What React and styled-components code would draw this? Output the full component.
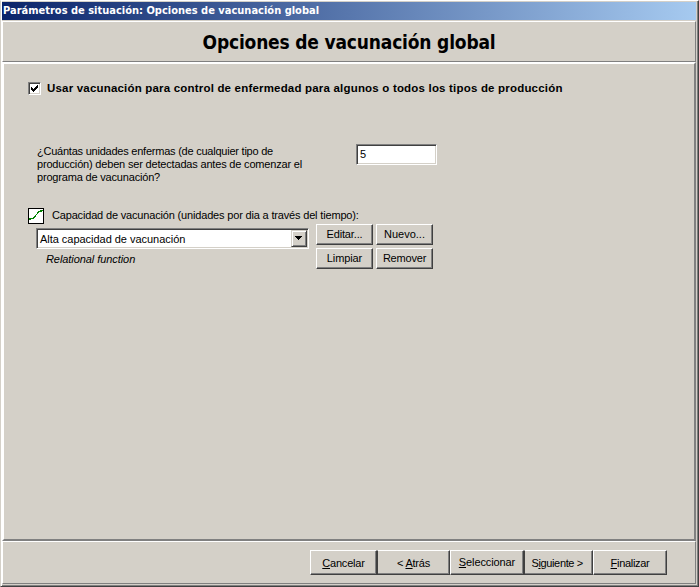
import React from "react";
import styled, { createGlobalStyle, css } from "styled-components";

const GlobalStyle = createGlobalStyle`
  * { box-sizing: border-box; }
  body { margin: 0; background: #d4d0c8; }
`;

const sunken = css`
  border: 1px solid;
  border-color: #808080 #fff #fff #808080;
  box-shadow: inset 1px 1px #404040, inset -1px -1px #d4d0c8;
`;

const raised = css`
  border: 1px solid;
  border-color: #fff #404040 #404040 #fff;
  box-shadow: inset -1px -1px #808080;
`;

const Window = styled.div`
  width: 699px;
  height: 587px;
  display: flex;
  flex-direction: column;
  background: #d4d0c8;
  border: 1px solid;
  border-color: #fff #404040 #404040 #d4d0c8;
  box-shadow: inset 1px 0 #fff, inset -1px -1px #808080;
  padding: 1px 2px 2px 1px;
  color: #000;
  font: 11px/13px "Liberation Sans", Arial, sans-serif;
  overflow: hidden;
`;

const TitleBar = styled.header`
  height: 18px;
  padding-left: 1px;
  background: linear-gradient(90deg, #0a246a, #a6caf0);
  color: #fff;
  font: bold 11px/18px "DejaVu Sans Condensed", "DejaVu Sans", sans-serif;
  font-stretch: condensed;
`;

const Heading = styled.section`
  height: 41px;
  margin: 1px 0 0;
  border: 1px solid;
  border-color: #fff #808080 #808080 #fff;
  display: flex;
  justify-content: center;
`;

const Title = styled.h1`
  margin: 0;
  font: bold 19px/40px "DejaVu Sans Condensed", "DejaVu Sans", sans-serif;
  font-stretch: condensed;
`;

const Body = styled.main`
  height: 479px;
  border: 2px solid;
  border-color: #fff #808080 #808080 #fff;
  padding: 18px 0 0 24px;
`;

const Label = styled.span`
  display: block;
  white-space: pre;
  letter-spacing: ${(p) => p.$track || 0}px;
`;

const CheckRow = styled.label`
  display: flex;
  align-items: center;
  gap: 6px;
  height: 13px;
  font-size: 11.5px;
  font-weight: bold;
`;

const CheckBox = styled.span`
  ${sunken}
  width: 13px;
  height: 13px;
  background: #fff;
  display: flex;
  svg { display: block; margin: 1px; }
`;

const QuestionRow = styled.div`
  display: flex;
  margin: 49px 0 0 8px;
`;

const Question = styled.div`
  width: 320px;
  padding: 1px 0 0 1px;
`;

const NumberField = styled.div`
  ${sunken}
  width: 81px;
  height: 21px;
  padding: 3px 3px;
  background: #fff;
`;

const CapacityRow = styled.div`
  display: flex;
  margin-top: 20px;
`;

const CapacityMain = styled.div`
  width: 288px;
  padding-top: 4px;
`;

const CapacityLabel = styled.div`
  display: flex;
  gap: 8px;
  height: 16px;
  line-height: 15px;
  svg { display: block; flex: none; }
`;

const Combo = styled.div`
  ${sunken}
  width: 273px;
  height: 21px;
  margin: 4px 0 0 8px;
  padding: 1px;
  display: flex;
  justify-content: space-between;
  background: #fff;
`;

const ComboText = styled.div`
  padding: 3px 0 0 2px;
`;

const ComboButton = styled.div`
  width: 16px;
  height: 17px;
  border: 1px solid;
  border-color: #d4d0c8 #404040 #404040 #d4d0c8;
  box-shadow: inset 1px 1px #fff, inset -1px -1px #808080;
  background: #d4d0c8;
  svg { display: block; margin: 5px 0 0 3px; }
`;

const Kind = styled.div`
  font-style: italic;
  margin: 4px 0 0 18px;
`;

const ButtonGrid = styled.div`
  display: grid;
  grid-template-columns: 57px 57px;
  grid-auto-rows: 21px;
  gap: 3px;
  margin-top: 20px;
`;

const Button = styled.button`
  ${raised}
  display: flex;
  justify-content: center;
  align-items: center;
  margin: 0;
  padding: 0;
  background: #d4d0c8;
  color: #000;
  font: inherit;
`;

const NavButton = styled(Button)`
  width: ${(p) => p.$width}px;
  height: 25px;
  border-left-color: ${(p) => (p.$joined ? "#404040" : "#fff")};
  padding-top: ${(p) => (p.$high ? 0 : 1)}px;
  u { text-underline-offset: 1px; text-decoration-thickness: 1px; text-decoration-skip-ink: none; }
`;

const Footer = styled.footer`
  flex: 1;
  border: 1px solid;
  border-color: #fff #808080 #808080 #fff;
  display: flex;
  justify-content: flex-end;
  padding: 8px 28px 0 0;
`;

export default function App() {
  return (
    <>
      <GlobalStyle />
      <Window>
        <TitleBar><Label>Parámetros de situación: Opciones de vacunación global</Label></TitleBar>
        <Heading><Title><Label $track={-0.18}>Opciones de vacunación global</Label></Title></Heading>
        <Body>
          <CheckRow>
            <CheckBox>
              <svg width="9" height="9" shapeRendering="crispEdges">
                <path d="M1 3h1v1h1v1h1v-1h1v-1h1v-1h1v-1h1v3h-1v1h-1v1h-1v1h-1v1h-1v-1h-1v-1h-1z" />
              </svg>
            </CheckBox>
            <Label $track={0.19}>Usar vacunación para control de enfermedad para algunos o todos los tipos de producción</Label>
          </CheckRow>
          <QuestionRow>
            <Question>
              <Label $track={-0.23}>¿Cuántas unidades enfermas (de cualquier tipo de</Label>
              <Label $track={-0.18}>producción) deben ser detectadas antes de comenzar el</Label>
              <Label $track={-0.18}>programa de vacunación?</Label>
            </Question>
            <NumberField>5</NumberField>
          </QuestionRow>
          <CapacityRow>
            <CapacityMain>
              <CapacityLabel>
                <svg width="16" height="16" shapeRendering="crispEdges">
                  <rect x="0.5" y="0.5" width="15" height="15" fill="#fff" stroke="#000" />
                  <path d="M1 11h2v1h-2zM1 10h5v1h-5zM5 9h2v1h-2zM6 8h2v1h-2zM7 7h1v1h-1zM8 6h1v1h-1zM9 5h1v1h-1zM9 4h2v1h-2zM10 3h4v1h-4zM12 2h3v1h-3z" fill="#008000" />
                </svg>
                <Label $track={-0.17}>Capacidad de vacunación (unidades por dia a través del tiempo):</Label>
              </CapacityLabel>
              <Combo>
                <ComboText><Label $track={-0.03}>Alta capacidad de vacunación</Label></ComboText>
                <ComboButton>
                  <svg width="7" height="4" shapeRendering="crispEdges"><path d="M0 0h7v1h-1v1h-1v1h-1v1h-1v-1h-1v-1h-1v-1h-1z" /></svg>
                </ComboButton>
              </Combo>
              <Kind><Label $track={-0.07}>Relational function</Label></Kind>
            </CapacityMain>
            <ButtonGrid>
              <Button><Label $track={-0.15}>Editar...</Label></Button>
              <Button><Label>Nuevo...</Label></Button>
              <Button><Label $track={-0.1}>Limpiar</Label></Button>
              <Button><Label $track={-0.2}>Remover</Label></Button>
            </ButtonGrid>
          </CapacityRow>
        </Body>
        <Footer>
          <NavButton $width={67}><Label $track={-0.2}><u>C</u>ancelar</Label></NavButton>
          <NavButton $width={73} $joined><Label $track={-0.25}>{"< "}<u>A</u>trás</Label></NavButton>
          <NavButton $width={74} $high><Label $track={-0.1}><u>S</u>eleccionar</Label></NavButton>
          <NavButton $width={69} $joined><Label $track={-0.35}>S<u>i</u>guiente {"> "}</Label></NavButton>
          <NavButton $width={74}><Label $track={-0.3}><u>F</u>inalizar</Label></NavButton>
        </Footer>
      </Window>
    </>
  );
}
